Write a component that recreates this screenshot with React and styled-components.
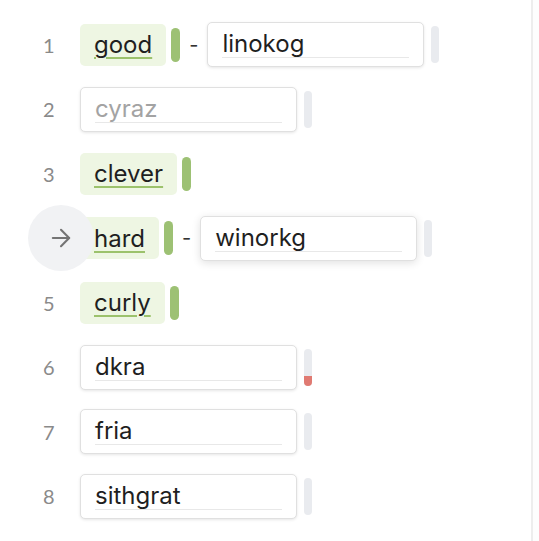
import React from "react";
import styled, { createGlobalStyle } from "styled-components";
import { ArrowRight } from "lucide-react";

const Global = createGlobalStyle`
  html, body { margin: 0; padding: 0; background: #fdfdfd; }
  body { font-family: Inter, Lato, sans-serif; color: #222; }
`;

const Page = styled.div`
  display: flex;
  min-height: 541px;
`;

const Main = styled.div`
  width: 533px;
  box-sizing: border-box;
  background: #fff;
  border-right: 2px solid #ededed;
  padding-top: 22px;
`;

const Row = styled.div`
  position: relative;
  display: flex;
  align-items: center;
  height: 45px;
  margin-bottom: 19.5px;
`;

const Num = styled.div`
  width: 80px;
  padding-left: 43px;
  box-sizing: border-box;
  font-family: Lato, sans-serif;
  font-size: 20px;
  color: #8a8a8a;
`;

const Chip = styled.div`
  display: flex;
  align-items: center;
  height: 42px;
  padding: 0 14px;
  background: #eef6e3;
  border-radius: 5px;
  font-size: 24px;
  color: #1f1f1f;
`;

const ChipText = styled.span`
  text-decoration: underline;
  text-decoration-color: #9cc26c;
  text-decoration-thickness: 1.5px;
  text-underline-offset: 4px;
`;

const GreenBar = styled.div`
  width: 9px;
  height: 34px;
  margin-left: 5px;
  background: #9dc174;
  border-radius: 5px;
`;

const Dash = styled.span`
  margin: 0 9px 0 9px;
  font-size: 20px;
  color: #333;
`;

const Input = styled.div`
  display: flex;
  align-items: center;
  width: 217px;
  height: 45px;
  box-sizing: border-box;
  padding: 0 14px;
  background: #fff;
  border: 1px solid #e0e0e0;
  border-radius: 5px;
  box-shadow: ${(p) =>
    p.$active ? "0 2px 8px rgba(0,0,0,0.12)" : "0 1px 3px rgba(0,0,0,0.10)"};
`;

const Field = styled.span`
  flex: 1;
  display: block;
  line-height: 26px;
  font-size: 24px;
  color: ${(p) => (p.$placeholder ? "#a3a3a3" : "#1f1f1f")};
  border-bottom: 1px solid #e8e8e8;
`;

const GrayBar = styled.div`
  position: relative;
  width: 8px;
  height: 37px;
  margin-left: 7px;
  background: #e9ebef;
  border-radius: 4px;
  overflow: hidden;
`;

const RedFill = styled.div`
  position: absolute;
  left: 0;
  right: 0;
  bottom: 0;
  height: ${(p) => p.$h}px;
  background: #e07a72;
`;

const NavCircle = styled.div`
  position: absolute;
  left: 28px;
  top: 50%;
  width: 66px;
  height: 66px;
  margin-top: -33px;
  border-radius: 50%;
  background: #f1f2f4;
  display: flex;
  align-items: center;
  justify-content: center;
  color: #747474;
  z-index: 2;
`;

const rows = [
  { n: 1, word: "good", answer: "linokog" },
  { n: 2, input: "cyraz", placeholder: true },
  { n: 3, word: "clever" },
  { n: 4, word: "hard", answer: "winorkg", active: true },
  { n: 5, word: "curly" },
  { n: 6, input: "dkra", error: 10 },
  { n: 7, input: "fria" },
  { n: 8, input: "sithgrat" },
];

export default function App() {
  return (
    <>
      <Global />
      <Page>
        <Main>
          {rows.map((r) => (
            <Row key={r.n}>
              {r.active && (
                <NavCircle>
                  <ArrowRight size={28} strokeWidth={1.8} />
                </NavCircle>
              )}
              <Num>{r.n}</Num>
              {r.word ? (
                <>
                  <Chip>
                    <ChipText>{r.word}</ChipText>
                  </Chip>
                  <GreenBar />
                  {r.answer && (
                    <>
                      <Dash>-</Dash>
                      <Input $active={r.active}>
                        <Field>{r.answer}</Field>
                      </Input>
                      <GrayBar />
                    </>
                  )}
                </>
              ) : (
                <>
                  <Input>
                    <Field $placeholder={r.placeholder}>{r.input}</Field>
                  </Input>
                  <GrayBar>{r.error && <RedFill $h={r.error} />}</GrayBar>
                </>
              )}
            </Row>
          ))}
        </Main>
      </Page>
    </>
  );
}
